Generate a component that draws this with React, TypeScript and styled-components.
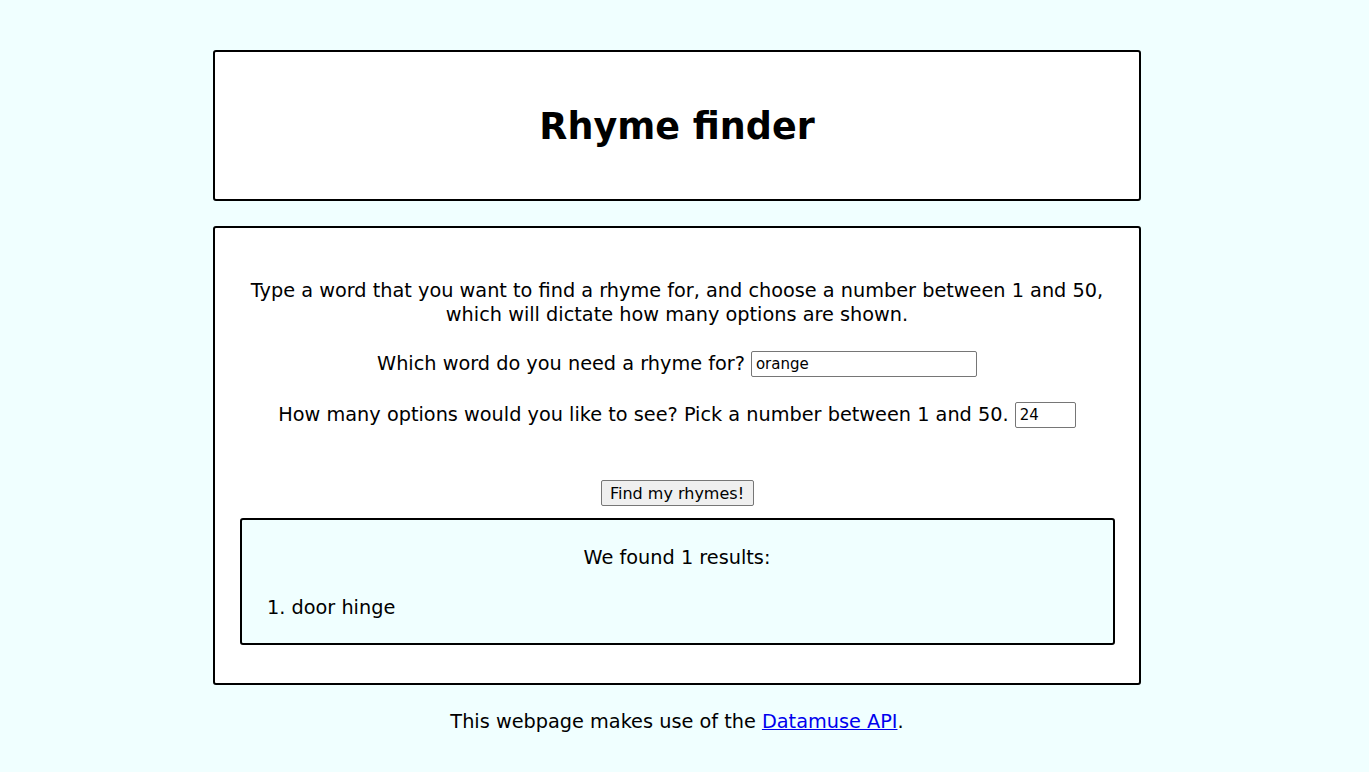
import React from "react";
import styled, { createGlobalStyle } from "styled-components";

const Global = createGlobalStyle`
  html, body { margin: 0; padding: 0; background: #f0ffff; }
  body { font-family: "DejaVu Sans", "Liberation Sans", sans-serif; color: #000; }
`;

const Page = styled.div`
  width: 1354px;
  padding-top: 50px;
  display: flex;
  flex-direction: column;
  align-items: center;
`;

const Card = styled.section`
  box-sizing: border-box;
  width: 928px;
  background: #fff;
  border: 2px solid #000;
  border-radius: 3px;
  display: flex;
  flex-direction: column;
  align-items: center;
`;

const Header = styled(Card)`
  height: 151px;
  justify-content: center;
`;

const Title = styled.h1`
  margin: 0;
  padding-top: 2px;
  font-size: 36.5px;
  font-weight: bold;
  line-height: 48px;
`;

const Main = styled(Card)`
  margin-top: 25px;
  padding: 51px 25px 38px;
`;

const Intro = styled.p`
  margin: 0;
  font-size: 19.3px;
  line-height: 24px;
  text-align: center;
  white-space: nowrap;
`;

const Row = styled.label<{ $top: number }>`
  margin-top: ${(p) => p.$top}px;
  font-size: 19.3px;
  line-height: 26px;
  display: flex;
  align-items: center;
  gap: 6px;
  white-space: nowrap;
`;

const Input = styled.input<{ $w: number }>`
  box-sizing: border-box;
  width: ${(p) => p.$w}px;
  height: 26px;
  border: 1px solid #767676;
  border-radius: 2px;
  padding: 1px 4px;
  font-family: "DejaVu Sans", sans-serif;
  font-size: 15px;
  background: #fff;
`;

const Button = styled.button`
  margin-top: 52px;
  box-sizing: border-box;
  width: 153px;
  height: 26px;
  border: 1px solid #767676;
  border-radius: 2px;
  background: #efefef;
  font-family: "DejaVu Sans", sans-serif;
  font-size: 16px;
  color: #000;
  padding: 0;
`;

const Results = styled.div`
  box-sizing: border-box;
  margin-top: 12px;
  width: 875px;
  height: 127px;
  background: #f0ffff;
  border: 2px solid #000;
  border-radius: 3px;
  padding-top: 26px;
  font-size: 19.3px;
  line-height: 24px;
`;

const ResultsHead = styled.p`
  margin: 0;
  text-align: center;
`;

const List = styled.ol`
  margin: 26px 0 0;
  padding-left: 50px;
`;

const Footer = styled.p`
  margin: 25px 0 0;
  font-size: 19.3px;
  line-height: 24px;
  text-align: center;
  a { color: #0000ee; }
`;

export default function App() {
  return (
    <>
      <Global />
      <Page>
        <Header>
          <Title>Rhyme finder</Title>
        </Header>
        <Main>
          <Intro>
            Type a word that you want to find a rhyme for, and choose a number between 1 and 50,
            <br />
            which will dictate how many options are shown.
          </Intro>
          <Row $top={24}>
            Which word do you need a rhyme for?
            <Input $w={226} type="text" defaultValue="orange" />
          </Row>
          <Row $top={25}>
            How many options would you like to see? Pick a number between 1 and 50.
            <Input $w={61} type="number" defaultValue={24} />
          </Row>
          <Button>Find my rhymes!</Button>
          <Results>
            <ResultsHead>We found 1 results:</ResultsHead>
            <List>
              <li>door hinge</li>
            </List>
          </Results>
        </Main>
        <Footer>
          This webpage makes use of the <a href="#">Datamuse API</a>.
        </Footer>
      </Page>
    </>
  );
}
